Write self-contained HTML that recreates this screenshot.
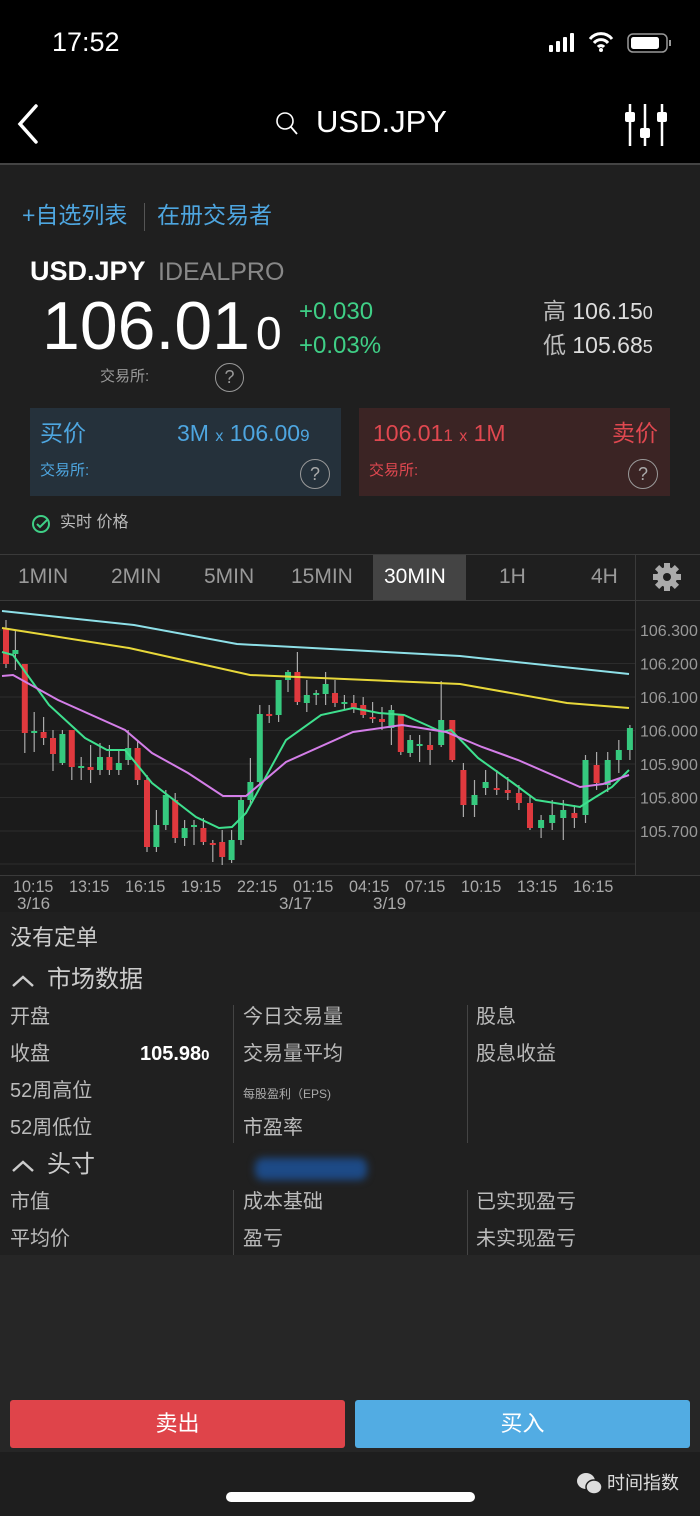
<!DOCTYPE html>
<html><head><meta charset="utf-8">
<style>
*{margin:0;padding:0;box-sizing:border-box}
body{width:700px;height:1516px;background:#1f1f1f;position:relative;overflow:hidden;font-family:"Liberation Sans","Noto Sans CJK SC",sans-serif;color:#ccc}
.a{position:absolute;white-space:nowrap;line-height:1}
.xl{position:absolute;top:878px;font-size:17px;color:#aaa;line-height:1;transform:scaleX(0.95);transform-origin:left}
</style></head><body>
<div class="a" style="left:0;top:0;width:700px;height:163px;background:#000"></div>
<div class="a" style="left:0;top:163px;width:700px;height:2px;background:#444"></div>
<div class="a" style="left:52px;top:29px;font-size:27px;color:#fff">17:52</div>
<svg class="a" style="left:545px;top:30px" width="130" height="26">
<rect x="4" y="15" width="4" height="7" rx="1" fill="#fff"/><rect x="11" y="11" width="4" height="11" rx="1" fill="#fff"/><rect x="18" y="7" width="4" height="15" rx="1" fill="#fff"/><rect x="25" y="3" width="4" height="19" rx="1" fill="#fff"/>
<path d="M45 9a14 14 0 0 1 22 0M49 13a9 9 0 0 1 14 0M53 17a4 4 0 0 1 6 0" stroke="#fff" stroke-width="3" fill="none"/><circle cx="56" cy="20" r="2" fill="#fff"/>
<rect x="83" y="4" width="39" height="18" rx="5" stroke="#999" stroke-width="1.5" fill="none"/><rect x="86" y="7" width="28" height="12" rx="2.5" fill="#fff"/><rect x="124" y="10" width="2" height="6" fill="#999"/>
</svg>
<svg class="a" style="left:14px;top:102px" width="30" height="44"><path d="M22 4L6 22l16 18" stroke="#fff" stroke-width="3.5" fill="none" stroke-linecap="round"/></svg>
<svg class="a" style="left:274px;top:110px" width="26" height="28"><circle cx="11" cy="11" r="8" stroke="#fff" stroke-width="1.6" fill="none"/><path d="M17 17l6 7" stroke="#fff" stroke-width="1.8"/></svg>
<div class="a" style="left:316px;top:106px;font-size:31px;color:#fff">USD.JPY</div>
<svg class="a" style="left:620px;top:100px" width="50" height="48"><g stroke="#fff" stroke-width="2.5"><path d="M10 4v42M25 4v42M42 4v42"/></g><rect x="5" y="12" width="10" height="10" rx="2" fill="#fff"/><rect x="20" y="28" width="10" height="10" rx="2" fill="#fff"/><rect x="37" y="12" width="10" height="10" rx="2" fill="#fff"/></svg>

<div class="a" style="left:22px;top:204px;font-size:23px;color:#4ea6e0">+自选列表</div>
<div class="a" style="left:144px;top:203px;width:1px;height:28px;background:#555"></div>
<div class="a" style="left:157px;top:204px;font-size:23px;color:#4ea6e0">在册交易者</div>
<div class="a" style="left:30px;top:258px;font-size:27px;color:#fff;font-weight:bold">USD.JPY</div>
<div class="a" style="left:158px;top:260px;font-size:25px;color:#888">IDEALPRO</div>
<div class="a" style="left:42px;top:292px;font-size:68px;color:#fff">106.01<span style="font-size:46px;margin-left:6px">0</span></div>
<div class="a" style="left:299px;top:300px;font-size:24px;color:#3fcf86">+0.030</div>
<div class="a" style="left:299px;top:334px;font-size:24px;color:#3fcf86">+0.03%</div>
<div class="a" style="left:543px;top:300px;font-size:23px;color:#bbb">高 <span style="color:#ddd">106.15<span style="font-size:18px">0</span></span></div>
<div class="a" style="left:543px;top:334px;font-size:23px;color:#bbb">低 <span style="color:#ddd">105.68<span style="font-size:18px">5</span></span></div>
<div class="a" style="left:100px;top:369px;font-size:15px;color:#999">交易所:</div>
<div class="a" style="left:215px;top:363px;width:29px;height:29px;border:1.5px solid #999;border-radius:50%;font-size:18px;color:#999;text-align:center;line-height:27px">?</div>

<div class="a" style="left:30px;top:408px;width:311px;height:88px;background:#25313b"></div>
<div class="a" style="left:40px;top:422px;font-size:23px;color:#4ea6e0">买价</div>
<div class="a" style="left:177px;top:422px;font-size:23px;color:#4ea6e0">3M <span style="font-size:16px">x</span> 106.00<span style="font-size:17px">9</span></div>
<div class="a" style="left:40px;top:463px;font-size:15px;color:#4ea6e0">交易所:</div>
<div class="a" style="left:300px;top:459px;width:30px;height:30px;border:1.5px solid #999;border-radius:50%;font-size:18px;color:#aaa;text-align:center;line-height:28px">?</div>
<div class="a" style="left:359px;top:408px;width:311px;height:88px;background:#3b2424"></div>
<div class="a" style="left:373px;top:422px;font-size:23px;color:#e04850">106.01<span style="font-size:17px">1</span> <span style="font-size:16px">x</span> 1M</div>
<div class="a" style="left:612px;top:422px;font-size:23px;color:#e04850">卖价</div>
<div class="a" style="left:369px;top:463px;font-size:15px;color:#e04850">交易所:</div>
<div class="a" style="left:628px;top:459px;width:30px;height:30px;border:1.5px solid #999;border-radius:50%;font-size:18px;color:#aaa;text-align:center;line-height:28px">?</div>
<svg class="a" style="left:31px;top:514px" width="22" height="22"><circle cx="10" cy="10" r="8" stroke="#3fcf86" stroke-width="2" fill="none"/><path d="M6 10l3 3 7-7" stroke="#3fcf86" stroke-width="2" fill="none"/></svg>
<div class="a" style="left:60px;top:515px;font-size:16px;color:#bbb">实时 价格</div>

<div class="a" style="left:0;top:554px;width:700px;height:1px;background:#3a3a3a"></div>
<div class="a" style="left:373px;top:555px;width:93px;height:45px;background:#444"></div>
<div class="a" style="left:0;top:600px;width:700px;height:1px;background:#3a3a3a"></div>
<div class="a" style="left:635px;top:555px;width:1px;height:320px;background:#3a3a3a"></div>
<div class="a" style="left:18px;top:566px;font-size:21px;color:#999">1MIN</div>
<div class="a" style="left:111px;top:566px;font-size:21px;color:#999">2MIN</div>
<div class="a" style="left:204px;top:566px;font-size:21px;color:#999">5MIN</div>
<div class="a" style="left:291px;top:566px;font-size:21px;color:#999">15MIN</div>
<div class="a" style="left:384px;top:566px;font-size:21px;color:#fff">30MIN</div>
<div class="a" style="left:499px;top:566px;font-size:21px;color:#999">1H</div>
<div class="a" style="left:591px;top:566px;font-size:21px;color:#999">4H</div>
<svg class="a" style="left:652px;top:562px" width="30" height="30" viewBox="-15 -15 30 30"><g fill="#aaa"><circle r="10"/><g id="t"><rect x="-3" y="-14" width="6" height="6"/></g><use href="#t" transform="rotate(45)"/><use href="#t" transform="rotate(90)"/><use href="#t" transform="rotate(135)"/><use href="#t" transform="rotate(180)"/><use href="#t" transform="rotate(225)"/><use href="#t" transform="rotate(270)"/><use href="#t" transform="rotate(315)"/></g><circle r="4" fill="#1f1f1f"/></svg>

<div class="a" style="left:0;top:601px;width:635px;height:274px;background:#1b1b1b"></div>
<svg class="a" id="ch" style="left:0;top:0" width="700" height="912"></svg>
<div class="a" style="left:0;top:875px;width:700px;height:1px;background:#3a3a3a"></div>
<div class="a" style="left:0;top:876px;width:700px;height:36px;background:#1d1d1d"></div>
<div class="xl" style="left:13px">10:15</div>
<div class="xl" style="left:69px">13:15</div>
<div class="xl" style="left:125px">16:15</div>
<div class="xl" style="left:181px">19:15</div>
<div class="xl" style="left:237px">22:15</div>
<div class="xl" style="left:293px">01:15</div>
<div class="xl" style="left:349px">04:15</div>
<div class="xl" style="left:405px">07:15</div>
<div class="xl" style="left:461px">10:15</div>
<div class="xl" style="left:517px">13:15</div>
<div class="xl" style="left:573px">16:15</div>
<div class="a" style="left:17px;top:895px;font-size:17px;color:#aaa">3/16</div>
<div class="a" style="left:279px;top:895px;font-size:17px;color:#aaa">3/17</div>
<div class="a" style="left:373px;top:895px;font-size:17px;color:#aaa">3/19</div>
<div class="a" style="left:0;top:912px;width:700px;height:343px;background:#202020"></div>

<div class="a" style="left:10px;top:927px;font-size:22px;color:#ccc">没有定单</div>
<svg class="a" style="left:10px;top:972px" width="28" height="18"><path d="M3 14l10-9 10 9" stroke="#ccc" stroke-width="2.5" fill="none"/></svg>
<div class="a" style="left:47px;top:968px;font-size:24px;color:#ccc">市场数据</div>
<div class="a" style="left:233px;top:1005px;width:1px;height:138px;background:#444"></div>
<div class="a" style="left:467px;top:1005px;width:1px;height:138px;background:#444"></div>
<div class="a" style="left:10px;top:1007px;font-size:20px;color:#bbb">开盘</div>
<div class="a" style="left:10px;top:1044px;font-size:20px;color:#bbb">收盘</div>
<div class="a" style="left:140px;top:1044px;font-size:20px;color:#fff;font-weight:bold">105.98<span style="font-size:15px">0</span></div>
<div class="a" style="left:10px;top:1081px;font-size:20px;color:#bbb">52周高位</div>
<div class="a" style="left:10px;top:1118px;font-size:20px;color:#bbb">52周低位</div>
<div class="a" style="left:243px;top:1007px;font-size:20px;color:#bbb">今日交易量</div>
<div class="a" style="left:243px;top:1044px;font-size:20px;color:#bbb">交易量平均</div>
<div class="a" style="left:243px;top:1088px;font-size:12px;color:#aaa">每股盈利（EPS)</div>
<div class="a" style="left:243px;top:1118px;font-size:20px;color:#bbb">市盈率</div>
<div class="a" style="left:476px;top:1007px;font-size:20px;color:#bbb">股息</div>
<div class="a" style="left:476px;top:1044px;font-size:20px;color:#bbb">股息收益</div>
<svg class="a" style="left:10px;top:1157px" width="28" height="18"><path d="M3 14l10-9 10 9" stroke="#ccc" stroke-width="2.5" fill="none"/></svg>
<div class="a" style="left:47px;top:1153px;font-size:24px;color:#ccc">头寸</div>
<div class="a" style="left:255px;top:1158px;width:112px;height:22px;background:#1d4a86;border-radius:8px;filter:blur(4px)"></div>
<div class="a" style="left:233px;top:1190px;width:1px;height:65px;background:#444"></div>
<div class="a" style="left:467px;top:1190px;width:1px;height:65px;background:#444"></div>
<div class="a" style="left:10px;top:1192px;font-size:20px;color:#bbb">市值</div>
<div class="a" style="left:10px;top:1229px;font-size:20px;color:#bbb">平均价</div>
<div class="a" style="left:243px;top:1192px;font-size:20px;color:#bbb">成本基础</div>
<div class="a" style="left:243px;top:1229px;font-size:20px;color:#bbb">盈亏</div>
<div class="a" style="left:476px;top:1192px;font-size:20px;color:#bbb">已实现盈亏</div>
<div class="a" style="left:476px;top:1229px;font-size:20px;color:#bbb">未实现盈亏</div>

<div class="a" style="left:0;top:1255px;width:700px;height:197px;background:#262626"></div>
<div class="a" style="left:10px;top:1400px;width:335px;height:48px;background:#df444a;border-radius:3px;color:#fff;font-size:22px;text-align:center;line-height:48px">卖出</div>
<div class="a" style="left:355px;top:1400px;width:335px;height:48px;background:#52ace3;border-radius:3px;color:#fff;font-size:22px;text-align:center;line-height:48px">买入</div>
<div class="a" style="left:0;top:1452px;width:700px;height:64px;background:#1e1e1e"></div>
<svg class="a" style="left:575px;top:1470px" width="30" height="28"><ellipse cx="11" cy="11" rx="9" ry="8" fill="#ddd"/><ellipse cx="19" cy="17" rx="8" ry="7" fill="#ddd" stroke="#1e1e1e" stroke-width="1.5"/></svg>
<div class="a" style="left:607px;top:1474px;font-size:18px;color:#ddd">时间指数</div>
<div class="a" style="left:226px;top:1492px;width:249px;height:10px;background:#fff;border-radius:5px"></div>

<script>
var s=document.getElementById('ch'),h='';
[630,663.5,697,730.5,764,797.5,831,864].forEach(function(y){h+='<line x1="0" x2="635" y1="'+y+'" y2="'+y+'" stroke="#2c2c2c"/>';});
var labs=['106.300','106.200','106.100','106.000','105.900','105.800','105.700'];
labs.forEach(function(t,i){h+='<text x="640" y="'+(636+i*33.5)+'" fill="#999" font-size="16" font-family="Liberation Sans">'+t+'</text>';});
var C=[[628,664,620,668,1],[650,654,630,670,0],[664,733,664,753,1],[731,733,712,752,0],[732,738,717,745,1],[738,754,730,771,1],[734,763,730,765,0],[730,767,730,780,1],[766,768,757,780,0],[767,770,745,783,1],[757,770,743,775,0],[757,770,745,775,1],[763,770,750,775,0],[748,760,730,765,0],[748,780,740,785,1],[780,847,775,852,1],[825,847,810,852,0],[795,825,790,830,0],[800,838,793,843,1],[828,838,820,846,0],[825,827,820,845,0],[828,842,818,845,1],[843,845,840,862,1],[842,857,830,865,1],[840,860,830,863,0],[800,840,796,845,0],[782,800,758,805,0],[714,782,705,785,0],[714,716,705,723,1],[680,715,680,722,0],[672,680,670,692,0],[672,702,652,705,1],[695,703,680,712,0],[693,695,690,705,0],[684,694,672,705,0],[693,703,680,707,1],[702,704,695,710,0],[703,708,695,713,1],[705,715,697,718,1],[717,719,702,723,1],[719,722,707,730,1],[710,728,705,745,0],[715,752,715,755,1],[740,753,735,757,0],[744,746,735,762,0],[745,750,732,765,1],[720,745,681,747,0],[720,760,720,762,1],[770,805,763,817,1],[795,805,780,817,0],[782,788,770,795,0],[788,790,770,795,1],[790,793,777,800,1],[793,803,785,810,1],[803,828,795,830,1],[820,828,815,838,0],[815,823,800,830,0],[810,818,800,840,0],[813,818,805,828,1],[760,815,755,823,0],[765,783,752,790,1],[760,785,752,792,0],[750,760,740,773,0],[728,750,725,760,0]];
C.forEach(function(c,i){var x=i<45?6+i*9.4:419+(i-44)*11.1;var col=c[4]?'#e0393e':'#36c97e';
h+='<line x1="'+x+'" x2="'+x+'" y1="'+c[2]+'" y2="'+c[3]+'" stroke="#aaa" stroke-width="1.2"/>';
h+='<rect x="'+(x-3)+'" y="'+c[0]+'" width="6" height="'+Math.max(2,c[1]-c[0])+'" fill="'+col+'"/>';});
function pl(p,c){h+='<polyline points="'+p+'" fill="none" stroke="'+c+'" stroke-width="2"/>';}
pl('2,611 134,625 237,644 460,656 629,674','#8ee0e8');
pl('2,628 129,648 250,675 460,684 567,703 629,708','#e8d83a');
pl('2,652 13,655 49,705 85,738 107,750 125,750 152,783 196,817 219,828 232,827 246,813 286,740 321,715 353,708 379,713 404,715 442,732 451,730 478,758 513,783 536,800 580,807 594,798 612,787 629,770','#3ee08e');
pl('2,676 13,675 58,700 125,730 152,753 188,773 223,796 246,796 286,762 353,732 402,725 446,732 482,747 518,760 580,787 603,784 629,775','#d47ee8');
s.innerHTML=h;
</script>
</body></html>
